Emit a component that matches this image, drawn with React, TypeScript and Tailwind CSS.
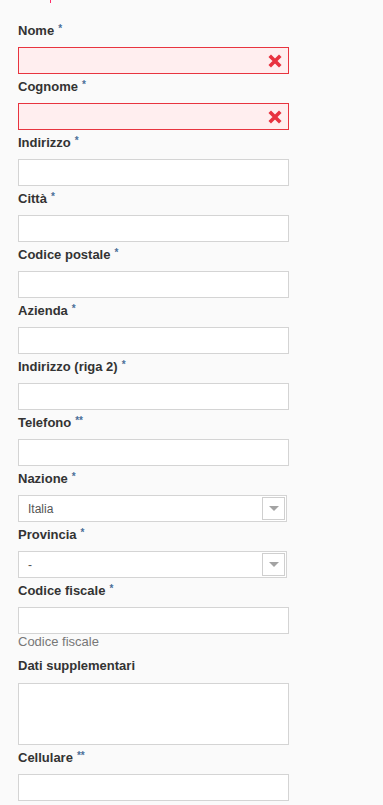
import React from 'react'

type Field = {
  label: string
  req?: '*' | '**'
  kind?: 'text' | 'error' | 'select' | 'textarea'
  value?: string
  help?: string
}

const fields: Field[] = [
  { label: 'Nome', req: '*', kind: 'error' },
  { label: 'Cognome', req: '*', kind: 'error' },
  { label: 'Indirizzo', req: '*' },
  { label: 'Città', req: '*' },
  { label: 'Codice postale', req: '*' },
  { label: 'Azienda', req: '*' },
  { label: 'Indirizzo (riga 2)', req: '*' },
  { label: 'Telefono', req: '**' },
  { label: 'Nazione', req: '*', kind: 'select', value: 'Italia' },
  { label: 'Provincia', req: '*', kind: 'select', value: '-' },
  { label: 'Codice fiscale', req: '*', help: 'Codice fiscale' },
  { label: 'Dati supplementari', kind: 'textarea' },
  { label: 'Cellulare', req: '**' },
]

function ErrorIcon() {
  return (
    <svg width="14" height="14" viewBox="0 0 14 14" className="absolute right-[6px] top-[6px]">
      <path d="M3 3 L11 11 M11 3 L3 11" stroke="#e8323f" strokeWidth="3.6" strokeLinecap="square" />
    </svg>
  )
}

function SelectBox({ value }: { value: string }) {
  return (
    <div className="flex items-center justify-between h-[27px] w-[269px] border border-[#d4d4d4] bg-white pl-[9px] pr-px">
      <span className="text-[12px] text-[#555]">{value}</span>
      <div className="flex items-center justify-center w-[23px] h-[23px] border border-[#cfcfcf] bg-white">
        <svg width="10" height="5" viewBox="0 0 10 5">
          <path d="M0 0 L10 0 L5 5 Z" fill="#a3a3a3" />
        </svg>
      </div>
    </div>
  )
}

function FieldRow({ f }: { f: Field }) {
  const kind = f.kind ?? 'text'
  return (
    <div>
      <div className="h-[29px] pt-[4px] leading-[18px] text-[13px] font-bold text-[#333]">
        {f.label}
        {f.req && (
          <span className="relative top-[2px] ml-[4px] align-top text-[10px] leading-none font-bold text-[#4a6f98]">{f.req}</span>
        )}
      </div>
      {kind === 'error' && (
        <div className="relative h-[27px] w-[271px] border border-[#e8343f] bg-[#ffeeef]">
          <ErrorIcon />
        </div>
      )}
      {kind === 'text' && <div className="h-[27px] w-[271px] border border-[#d4d4d4] bg-white" />}
      {kind === 'select' && <SelectBox value={f.value ?? ''} />}
      {kind === 'textarea' && <div className="mt-px h-[62px] w-[271px] border border-[#d4d4d4] bg-white" />}
      {f.help && <div className="h-[19px] leading-[16px] text-[13px] text-[#777]">{f.help}</div>}
    </div>
  )
}

export default function App() {
  return (
    <div className="min-h-[805px] w-[383px] bg-[#fafafa] pl-[18px] font-['Liberation_Sans',Arial,sans-serif]">
      <div className="h-[18px] pl-[32px]">
        <span className="block w-px h-[3px] bg-[#ff2d6a]" />
      </div>
      {fields.map((f) => (
        <FieldRow key={f.label} f={f} />
      ))}
    </div>
  )
}
